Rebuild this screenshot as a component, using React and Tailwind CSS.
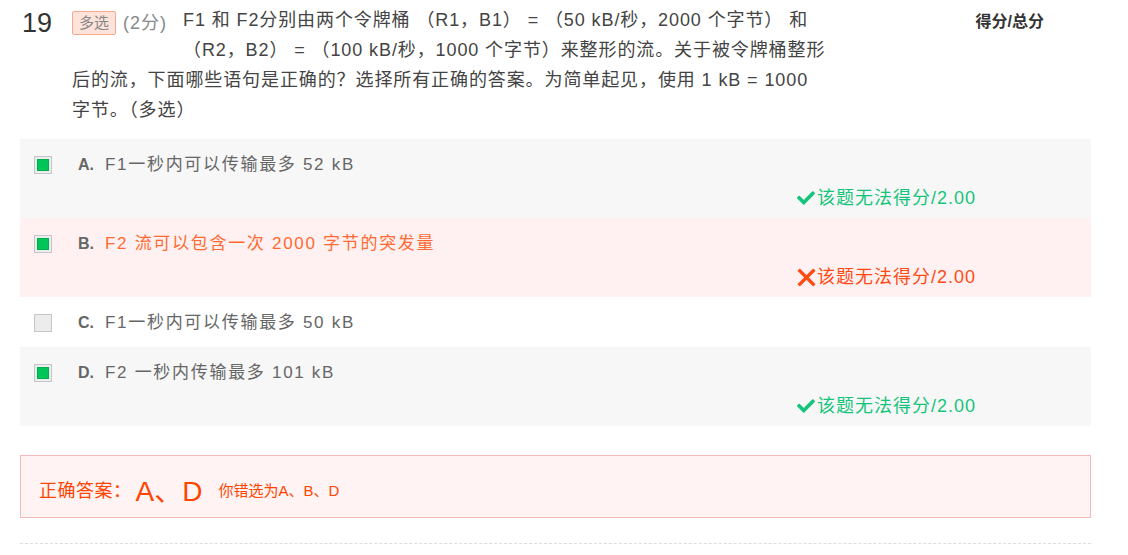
import { FaCheck } from "react-icons/fa";

const font = { fontFamily: '"Liberation Sans", "Noto Sans CJK SC", sans-serif' };

const options = [
  { key: "A", text: "F1一秒内可以传输最多 52 kB", checked: true, result: "right", bg: "bg-[#f7f7f7]" },
  { key: "B", text: "F2 流可以包含一次 2000 字节的突发量", checked: true, result: "wrong", bg: "bg-[#fff1f1]" },
  { key: "C", text: "F1一秒内可以传输最多 50 kB", checked: false, result: null, bg: "bg-white" },
  { key: "D", text: "F2 一秒内传输最多 101 kB", checked: true, result: "right", bg: "bg-[#f7f7f7]" },
];

function Checkbox({ checked }) {
  return (
    <div className="w-[18px] h-[18px] border border-[#c6c6c6] bg-[#ececec] p-[2px] shrink-0">
      {checked && <div className="w-full h-full bg-[#02c55a] border border-[#00b04f]" />}
    </div>
  );
}

function Cross() {
  return (
    <svg viewBox="0 0 20 20" className="w-[19px] h-[19px] mr-[1px]">
      <path d="M3 3 L17 17 M17 3 L3 17" stroke="currentColor" strokeWidth="3.6" strokeLinecap="square" />
    </svg>
  );
}

function OptionRow({ opt }) {
  return (
    <div className={`${opt.bg} pt-[14px] ${opt.result ? "pb-[8px]" : "pb-[12px]"}`}>
      <div className="flex items-center h-6 pl-[14px]">
        <Checkbox checked={opt.checked} />
        <span className="ml-[26px] w-[27px] text-[16px] font-bold text-[#666]">{opt.key}.</span>
        <span
          className={`text-[17px] tracking-[1.7px] ${opt.result === "wrong" ? "text-[#ff6a33]" : "text-[#666]"}`}
        >
          {opt.text}
        </span>
      </div>
      {opt.result && (
        <div
          className={`mt-[9px] h-6 flex items-center pl-[777px] text-[18px] tracking-[1px] ${
            opt.result === "right" ? "text-[#14c47a]" : "text-[#ff4a14]"
          }`}
        >
          {opt.result === "right" ? <FaCheck className="w-[18px] h-[18px] mr-[2px]" /> : <Cross />}
          <span>该题无法得分/2.00</span>
        </div>
      )}
    </div>
  );
}

export default function App() {
  return (
    <div className="w-[1128px] h-[555px] bg-white overflow-hidden" style={font}>
      <div className="ml-5 w-[1071px]">
        {/* 题干 */}
        <div className="flex pt-[5px]">
          <div className="w-[52px] text-[27px] leading-[36px] text-[#333] pl-[2px]">19</div>
          <div className="w-[775px] text-[18px] leading-[30px] text-[#444] tracking-[0.9px]">
            <div className="float-left h-[60px] w-[111px] flex items-start pt-[6px]">
              <span className="inline-block h-6 px-[6px] leading-[22px] text-[15px] tracking-normal text-[#888] bg-[#fde3da] border border-[#f5a98f] rounded-[2px]">
                多选
              </span>
              <span className="ml-[7px] leading-6 text-[18px] tracking-[1px] text-[#888]">(2分)</span>
            </div>
            F1 和 F2分别由两个令牌桶 （R1，B1） = （50 kB/秒，2000 个字节） 和
            <br />
            （R2，B2） = （100 kB/秒，1000 个字节）来整形的流。关于被令牌桶整形
            <br />
            后的流，下面哪些语句是正确的？选择所有正确的答案。为简单起见，使用 1 kB = 1000
            <br />
            字节。（多选）
          </div>
          <div className="ml-auto mr-[47px] pt-[5px] text-[16px] font-bold text-[#333] leading-6">得分/总分</div>
        </div>

        {/* 选项 */}
        <div className="mt-[14px]">
          {options.map((opt) => (
            <OptionRow key={opt.key} opt={opt} />
          ))}
        </div>

        {/* 正确答案 */}
        <div className="mt-[29px] h-[63px] border border-[#f4b9b9] bg-[#fff3f3] flex items-center pl-[18px] pt-[10px] text-[#ff4400]">
          <span className="text-[18px] tracking-[0.5px]">正确答案：</span>
          <span className="ml-[4px] text-[28px] leading-none">A、D</span>
          <span className="ml-[16px] text-[15px]">你错选为A、B、D</span>
        </div>

        <div className="mt-[25px] border-t border-dashed border-[#ddd]" />
      </div>
    </div>
  );
}
